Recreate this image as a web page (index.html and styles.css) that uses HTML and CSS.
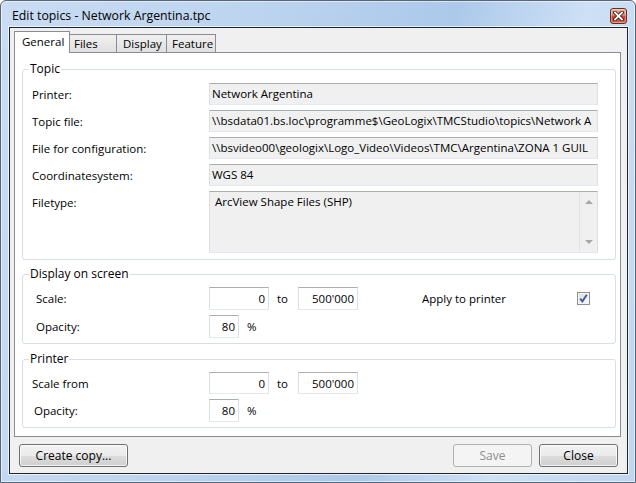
FILE: index.html
```html
<html lang="en">
<head>
<meta charset="UTF-8" />
<title>Edit topics - Network Argentina.tpc</title>
<link rel="stylesheet" href="styles.css">
</head>
<body>
  <div class="window">
    <div class="titlebar">
      <span class="title">Edit topics - Network Argentina.tpc</span>
      <button class="close" aria-label="Close">
        <svg width="11" height="10" viewBox="0 0 11 10">
          <path d="M2 1.5 L9 8.5 M9 1.5 L2 8.5" stroke="#3b1a16" stroke-width="3.6" stroke-linecap="square"/>
          <path d="M2 1.5 L9 8.5 M9 1.5 L2 8.5" stroke="#fff" stroke-width="1.8" stroke-linecap="square"/>
        </svg>
      </button>
    </div>

    <div class="client">
      <div class="tabs">
        <div class="tab active">General</div>
        <div class="tab files">Files</div>
        <div class="tab display">Display</div>
        <div class="tab feature">Feature</div>
      </div>

      <div class="panel">
        <!-- Topic -->
        <div class="group topic">
          <div class="group-title">Topic</div>
          <div class="rows">
            <div class="row"><span class="label">Printer:</span><div class="box">Network Argentina</div></div>
            <div class="row"><span class="label">Topic file:</span><div class="box">\\bsdata01.bs.loc\programme$\GeoLogix\TMCStudio\topics\Network A</div></div>
            <div class="row"><span class="label">File for configuration:</span><div class="box">\\bsvideo00\geologix\Logo_Video\Videos\TMC\Argentina\ZONA 1 GUIL</div></div>
            <div class="row"><span class="label">Coordinatesystem:</span><div class="box">WGS 84</div></div>
            <div class="row tall">
              <span class="label">Filetype:</span>
              <div class="box memo">
                <div class="memo-text">ArcView Shape Files (SHP)</div>
                <div class="scroll">
                  <span class="arrow up"></span>
                  <span class="arrow down"></span>
                </div>
              </div>
            </div>
          </div>
        </div>

        <!-- Display on screen -->
        <div class="group screen">
          <div class="group-title">Display on screen</div>
          <div class="rows">
            <div class="row">
              <span class="label">Scale:</span>
              <div class="num">0</div><span class="to">to</span><div class="num">500'000</div>
              <span class="apply">Apply to printer</span>
              <span class="check">
                <svg width="11" height="11" viewBox="0 0 11 11"><path d="M2.2 5.6 L4.4 8.4 L8.8 1.8" fill="none" stroke="#3e57a3" stroke-width="1.9"/></svg>
              </span>
            </div>
            <div class="row">
              <span class="label">Opacity:</span>
              <div class="num small">80</div><span class="unit">%</span>
            </div>
          </div>
        </div>

        <!-- Printer -->
        <div class="group printer">
          <div class="group-title">Printer</div>
          <div class="rows">
            <div class="row first">
              <span class="label">Scale from</span>
              <div class="num">0</div><span class="to">to</span><div class="num">500'000</div>
            </div>
            <div class="row">
              <span class="label shift">Opacity:</span>
              <div class="num small">80</div><span class="unit">%</span>
            </div>
          </div>
        </div>
      </div>

      <div class="footer">
        <button class="btn copy">Create copy...</button>
        <span class="spacer"></span>
        <button class="btn" disabled>Save</button>
        <button class="btn">Close</button>
      </div>
    </div>
  </div>
</body>
</html>
```

FILE: styles.css
```css
:root{
  --frame-edge:#55657a;
  --tab-border:#898c95;
  --group-border:#d5dfe5;
  --field-bg:#f0f0f0;
  --face:#f0f0f0;
}
*{box-sizing:border-box}
html,body{margin:0;height:100%}
body{
  width:636px;
  height:483px;
  overflow:hidden;
  background:#fff;
  font-family:"Open Sans", "Noto Sans", sans-serif;
  font-size:11.5px;
  color:#000;
}

/* window frame */
.window{
  height:483px;
  border:1px solid var(--frame-edge);
  border-radius:6px 6px 0 0;
  background:
    linear-gradient(102deg, #c9dcf2 0%, #bcd4ef 35%, #acc9ea 62%, #cde0f5 80%, #bfd6f0 100%);
  display:flex;
  flex-direction:column;
  box-shadow: inset 0 0 0 1px rgba(255,255,255,.55);
}
.titlebar{
  height:26px;
  flex:none;
  display:flex;
  align-items:center;
  padding:0 8px 0 11px;
}
.title{
  flex:1;
  font-size:12.3px;
  padding-top:2px;
  white-space:nowrap;
}
.close{
  width:17px; height:16px;
  margin-top:4px;
  padding:0;
  border:1px solid #6d2b22;
  border-radius:3px;
  background:linear-gradient(180deg, #eab1a3 0%, #d9826c 45%, #c2432d 55%, #d6674b 100%);
  box-shadow: inset 0 0 0 1px rgba(255,255,255,.35);
  display:grid;
  place-items:center;
}

/* client area */
.client{
  flex:1;
  margin:0 7px 8px 8px;
  border:1px solid #1c2430;
  box-shadow:0 0 0 1px rgba(255,255,255,.7);
  background:var(--face);
  padding:3px 6px 6px 4px;
  display:flex;
  flex-direction:column;
}

/* tabs */
.tabs{
  height:21px;
  display:flex;
  align-items:flex-end;
  flex:none;
}
.tab{
  height:18px;
  padding:0 0 0 5px;
  line-height:17px;
  border:1px solid var(--tab-border);
  border-bottom:none;
  background:linear-gradient(180deg, #f0f0f0, #e0e0e0);
  margin-left:-1px;
  white-space:nowrap;
}
.tab.active{
  width:56px;
  height:22px;
  margin-bottom:-1px;
  margin-left:0;
  margin-right:-1px;
  padding-left:7px;
  line-height:20px;
  background:#fff;
  position:relative;
  z-index:1;
}
.tab.files{width:49px}
.tab.display{width:51px;padding-left:6px}
.tab.feature{width:50px}

.panel{
  flex:1;
  border:1px solid var(--tab-border);
  background:#fff;
  padding:16px 4px 7px 7px;
}

/* group boxes */
.group{
  border:1px solid var(--group-border);
  border-radius:3px;
  padding:0 17px 6px 9px;
}
.group + .group{margin-top:14px}
.group.printer{margin-top:15px}
.group-title{
  width:fit-content;
  margin:-9px 0 0 -3px;
  padding:0 1px;
  line-height:16px;
  font-size:12px;
  background:#fff;
}
.screen .group-title{margin-left:-7px}
.rows{
  display:flex;
  flex-direction:column;
  gap:5px;
  margin-top:6px;
}
.screen .rows,.printer .rows{margin-top:5px;gap:5px}
.screen{padding:0 25px 5px 13px}
.printer{padding:0 25px 5px 9px}

.row{
  display:flex;
  align-items:center;
  height:22px;
}
.screen .row{height:23px}
.printer .row{height:23px}
.printer .row.first{height:22px}
.label{
  width:177px;
  flex:none;
  white-space:nowrap;
}
.screen .label{width:173px}
.label.shift{padding-left:2px}

.box{
  flex:1;
  height:22px;
  min-width:0;
  background:var(--field-bg);
  border:1px solid #dbdfe6;
  border-top-color:#abadb3;
  border-bottom-color:#e3e9ef;
  padding:0 2px;
  line-height:20px;
  white-space:nowrap;
  overflow:hidden;
}
.row.tall{height:62px;align-items:flex-start}
.row.tall .label{padding-top:4px}
.memo{
  height:62px;
  display:flex;
  padding:0;
}
.memo-text{
  flex:1;
  padding:2px 0 0 5px;
  line-height:16px;
}
.scroll{
  width:18px;
  flex:none;
  border-left:1px solid #e2e2e2;
  display:flex;
  flex-direction:column;
  justify-content:space-between;
  align-items:center;
  padding:8px 0 8px;
}
.arrow{
  width:0;height:0;
  border-left:4px solid transparent;
  border-right:4px solid transparent;
}
.arrow.up{border-bottom:4px solid #a7a7a7}
.arrow.down{border-top:4px solid #a7a7a7}

.num{
  width:60px;
  height:100%;
  flex:none;
  background:#fff;
  border:1px solid #dbdfe6;
  border-top-color:#abadb3;
  border-bottom-color:#e3e9ef;
  text-align:right;
  padding:0 3px;
  line-height:21px;
}
.num.small{width:30px}
.to{width:21px;margin-left:8px;flex:none}
.unit{margin-left:8px}
.apply{margin-left:64px;width:155px;flex:none}
.check{
  width:13px;height:13px;
  border:1px solid #8f8f8f;
  background:linear-gradient(135deg, #dcdcdc, #fbfbfb);
  box-shadow:inset 0 0 0 1px #f4f4f4;
  display:grid;
  place-items:center;
}

/* buttons */
.footer{
  flex:none;
  display:flex;
  gap:7px;
  margin-top:7px;
  padding:0 3px 0 5px;
}
.spacer{flex:1}
.btn{
  height:23px;
  width:79px;
  font:inherit;
  font-size:12px;
  color:#000;
  border:1px solid #707070;
  border-radius:3px;
  background:linear-gradient(180deg, #f2f2f2 0%, #ebebeb 50%, #dddddd 51%, #cfcfcf 100%);
  box-shadow:inset 0 0 0 1px rgba(255,255,255,.75);
  padding:0;
}
.btn.copy{width:109px}
.btn:disabled{
  color:#8d8d8d;
  border-color:#adb2b5;
  background:#f4f4f4;
  box-shadow:none;
}
```
